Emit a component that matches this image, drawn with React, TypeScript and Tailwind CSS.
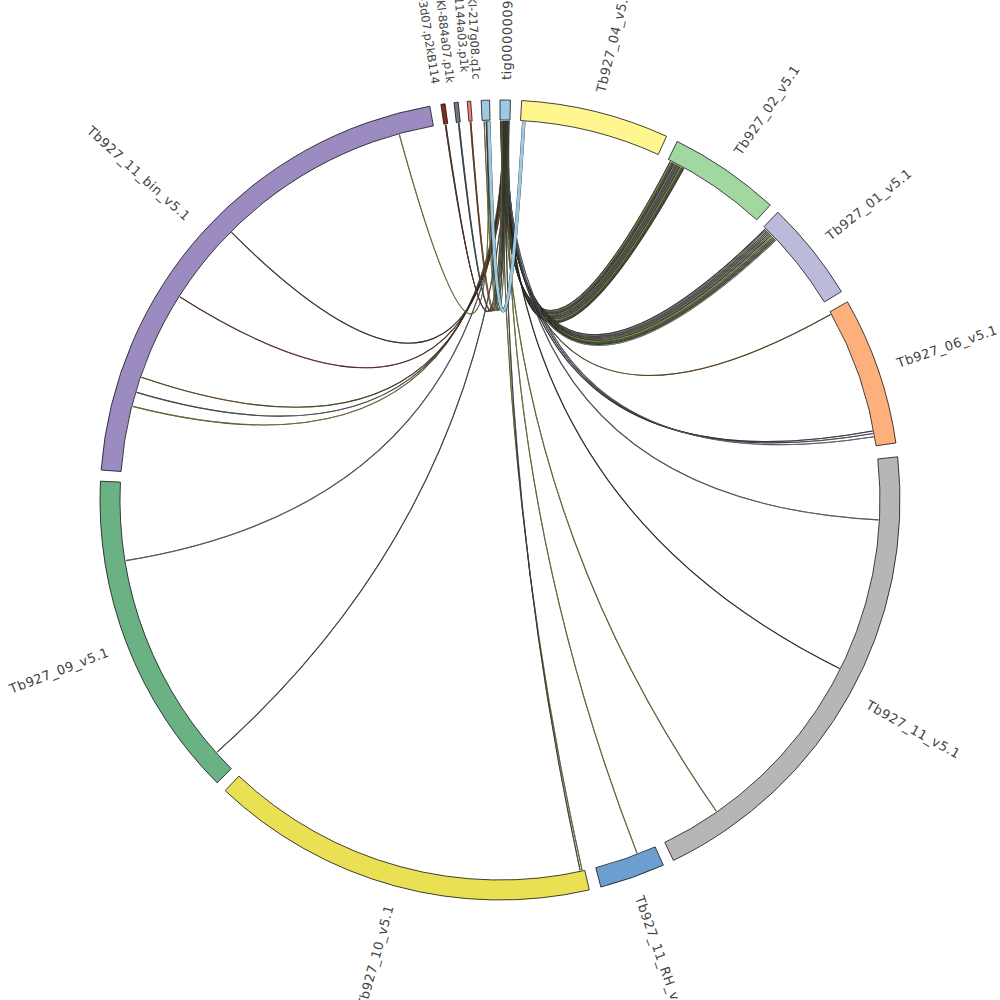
const C = 500;
const R_OUT = 400;
const R_IN = 380;
const R_LINK = 379;
const R_LABEL = 420;

type Segment = {
  name: string;
  start: number;
  end: number;
  fill: string;
  labelAt?: number;
  labelR?: number;
  small?: boolean;
};

type Link = {
  from: number;
  to: number;
  color: string;
  width?: number;
  bend?: number;
};

const segments: Segment[] = [
  { name: "tig00000099", start: 0, end: 1.5, fill: "#9ecae1", labelAt: 0.9 },
  { name: "Tb927_04_v5.1", start: 3.1, end: 24.6, fill: "#fff68f" },
  { name: "Tb927_02_v5.1", start: 26.3, end: 42.5, fill: "#a1d89f" },
  { name: "Tb927_01_v5.1", start: 44.0, end: 58.6, fill: "#bcbadb" },
  { name: "Tb927_06_v5.1", start: 60.3, end: 81.8, fill: "#fdb07b" },
  { name: "Tb927_11_v5.1", start: 83.8, end: 154.3, fill: "#b6b6b6" },
  { name: "Tb927_11_RH_v5.1", start: 155.9, end: 165.4, fill: "#6a9fcf" },
  { name: "Tb927_10_v5.1", start: 167.1, end: 223.4, fill: "#e9e053" },
  { name: "Tb927_09_v5.1", start: 225.0, end: 272.7, fill: "#6ab283" },
  { name: "Tb927_11_bin_v5.1", start: 274.3, end: 349.9, fill: "#9b8bc0" },
  { name: "TB11Cs2-RPCI93-3d07.p2kB114", start: 351.5, end: 352.1, fill: "#8b2a1a", labelAt: 351.2, labelR: 421, small: true },
  { name: "TB11Cs4-TBKl-884a07.p1k", start: 353.4, end: 354.0, fill: "#6b7b88", labelAt: 353.2, labelR: 420, small: true },
  { name: "TB11Cs3-TBKl-1144a03.p1k", start: 355.3, end: 355.8, fill: "#fb8072", labelAt: 355.3, labelR: 429, small: true },
  { name: "TB11Cs1-TBKl-217g08.q1c", start: 357.3, end: 358.5, fill: "#9ecae1", labelAt: 356.8, labelR: 421, small: true },
];

const palette = [
  "#1d5a40",
  "#e8d848",
  "#3a7a62",
  "#8a5a26",
  "#444444",
  "#8fc48a",
  "#6a5a8a",
  "#b0623d",
  "#3d6f8a",
  "#9c9c3a",
];

// tig00000099 carries most of the hits, small contigs loop back to it
const links: Link[] = [];
for (let i = 0; i < 15; i++) {
  links.push({
    from: 0.1 + i * 0.09,
    to: 26.7 + i * 0.165,
    color: palette[i % palette.length],
    bend: 1 + (14 - i) * 1.5,
  });
}
for (let i = 0; i < 12; i++) {
  links.push({
    from: 0.15 + i * 0.1,
    to: 44.4 + i * 0.21,
    color: palette[(i + 4) % palette.length],
    bend: 1 + (11 - i) * 1.4,
  });
}
links.push(
  { from: 0.6, to: 60.7, color: "#8a5a26" },
  { from: 0.5, to: 79.5, color: "#444444" },
  { from: 0.7, to: 79.9, color: "#6a5a8a", bend: 3 },
  { from: 0.9, to: 80.4, color: "#7b8b98", bend: 6 },
  { from: 1.1, to: 93.0, color: "#6a8a9a" },
  { from: 0.8, to: 116.4, color: "#333333" },
  { from: 0.4, to: 145.2, color: "#9c9c3a" },
  { from: 1.2, to: 158.8, color: "#9c9c3a" },
  { from: 0.3, to: 167.5, color: "#9c9c3a" },
  { from: 0.9, to: 167.8, color: "#555555" },
  { from: 1.3, to: 228.3, color: "#4a6a5a" },
  { from: 1.0, to: 260.8, color: "#6a8a9a" },
  { from: 0.6, to: 284.3, color: "#9c9c3a" },
  { from: 0.8, to: 286.5, color: "#666666" },
  { from: 1.0, to: 288.9, color: "#8a5a26" },
  { from: 1.2, to: 302.4, color: "#8a3a2a" },
  { from: 0.5, to: 314.9, color: "#444444" },
  { from: 358.0, to: 344.6, color: "#9c9c3a" },
  { from: 351.8, to: 0.5, color: "#2d5f4c" },
  { from: 351.7, to: 1.0, color: "#8a3a2a" },
  { from: 353.7, to: 0.7, color: "#3d6f8a" },
  { from: 353.8, to: 1.1, color: "#666666" },
  { from: 355.5, to: 0.4, color: "#b0623d" },
  { from: 355.6, to: 1.2, color: "#8a5a26" },
  { from: 357.6, to: 0.3, color: "#9c9c3a" },
  { from: 357.9, to: 0.8, color: "#555555" },
  { from: 358.2, to: 1.3, color: "#3a7a62" },
  { from: 3.6, to: 358.3, color: "#9ecae1", width: 3 },
);

function pt(r: number, deg: number): [number, number] {
  const t = (deg * Math.PI) / 180;
  return [C + r * Math.sin(t), C - r * Math.cos(t)];
}

function f(p: [number, number]) {
  return `${p[0].toFixed(2)} ${p[1].toFixed(2)}`;
}

function arcPath(s: Segment) {
  const large = s.end - s.start > 180 ? 1 : 0;
  return [
    `M ${f(pt(R_OUT, s.start))}`,
    `A ${R_OUT} ${R_OUT} 0 ${large} 1 ${f(pt(R_OUT, s.end))}`,
    `L ${f(pt(R_IN, s.end))}`,
    `A ${R_IN} ${R_IN} 0 ${large} 0 ${f(pt(R_IN, s.start))}`,
    "Z",
  ].join(" ");
}

function linkPath(l: Link) {
  const p1 = pt(R_LINK, l.from);
  const p2 = pt(R_LINK, l.to);
  let cx = C;
  let cy = C;
  if (l.bend) {
    // pull the control point off centre, along the bisector of both ends
    const dx = p1[0] + p2[0] - 2 * C;
    const dy = p1[1] + p2[1] - 2 * C;
    const len = Math.hypot(dx, dy) || 1;
    cx += (dx / len) * l.bend;
    cy += (dy / len) * l.bend;
  }
  return `M ${f(p1)} Q ${cx.toFixed(2)} ${cy.toFixed(2)} ${f(p2)}`;
}

function Label({ s }: { s: Segment }) {
  const mid = s.labelAt ?? (s.start + s.end) / 2;
  const [x, y] = pt(s.labelR ?? R_LABEL, mid);
  const right = mid < 180;
  const rot = right ? mid - 90 : mid - 270;
  return (
    <text
      transform={`translate(${x.toFixed(2)} ${y.toFixed(2)}) rotate(${rot.toFixed(2)})`}
      textAnchor={right ? "start" : "end"}
      dominantBaseline="central"
      fontSize={s.small ? 11.5 : 13}
      letterSpacing={s.small ? 0 : 0.5}
      fill="#444444"
    >
      {s.name}
    </text>
  );
}

export default function App() {
  return (
    <div className="w-[1000px] h-[1000px] bg-white overflow-hidden">
      <svg
        width={1000}
        height={1000}
        viewBox="0 0 1000 1000"
        className="block font-['DejaVu_Sans',sans-serif]"
      >
        <g fill="none">
          {links.map((l, i) => {
            const w = l.width ?? 0.6;
            return (
              <g key={i}>
                <path d={linkPath(l)} stroke="#111111" strokeWidth={w + 0.5} strokeOpacity={0.9} />
                <path d={linkPath(l)} stroke={l.color} strokeWidth={w} />
              </g>
            );
          })}
        </g>
        {segments.map((s) => (
          <path key={s.name} d={arcPath(s)} fill={s.fill} stroke="#111111" strokeWidth={0.8} />
        ))}
        {segments.map((s) => (
          <Label key={s.name} s={s} />
        ))}
      </svg>
    </div>
  );
}
